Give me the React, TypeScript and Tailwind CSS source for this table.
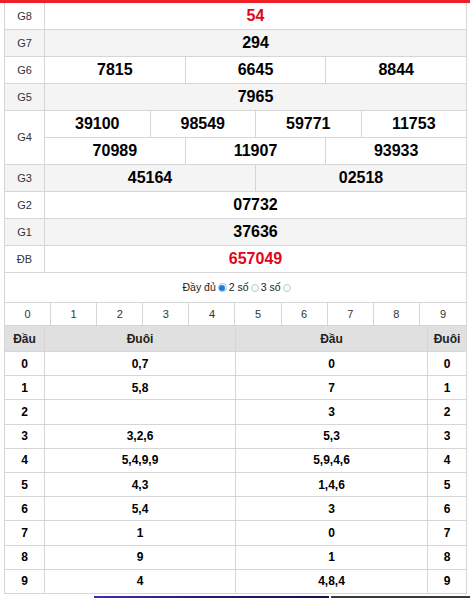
import React from "react";

const LINE = "border-[#d6d6d6]";

type Prize = { label: string; lines: string[][]; alt?: boolean; red?: boolean };

const PRIZES: Prize[] = [
  { label: "G8", lines: [["54"]], red: true },
  { label: "G7", lines: [["294"]], alt: true },
  { label: "G6", lines: [["7815", "6645", "8844"]] },
  { label: "G5", lines: [["7965"]], alt: true },
  {
    label: "G4",
    lines: [
      ["39100", "98549", "59771", "11753"],
      ["70989", "11907", "93933"],
    ],
  },
  { label: "G3", lines: [["45164", "02518"]], alt: true },
  { label: "G2", lines: [["07732"]] },
  { label: "G1", lines: [["37636"]], alt: true },
  { label: "ĐB", lines: [["657049"]], red: true },
];

// đầu | đuôi (left half), đầu | đuôi (right half)
const LOTO: [string, string, string, string][] = [
  ["0", "0,7", "0", "0"],
  ["1", "5,8", "7", "1"],
  ["2", "", "3", "2"],
  ["3", "3,2,6", "5,3", "3"],
  ["4", "5,4,9,9", "5,9,4,6", "4"],
  ["5", "4,3", "1,4,6", "5"],
  ["6", "5,4", "3", "6"],
  ["7", "1", "0", "7"],
  ["8", "9", "1", "8"],
  ["9", "4", "4,8,4", "9"],
];

function PrizeRow({ p }: { p: Prize }) {
  return (
    <div
      className={`flex border-b ${LINE} ${p.alt ? "bg-[#f4f4f4]" : "bg-white"}`}
    >
      <div
        className={`w-[40px] shrink-0 border-r ${LINE} flex items-center justify-center text-[11px] text-[#333]`}
      >
        {p.label}
      </div>
      <div className="flex-1 flex flex-col">
        {p.lines.map((line, i) => (
          <div
            key={i}
            className={
              i < p.lines.length - 1
                ? `flex h-[27px] border-b ${LINE}`
                : "flex h-[26px]"
            }
          >
            {line.map((n, j) => (
              <div
                key={j}
                className={`flex-1 flex items-center justify-center text-[16px] font-bold ${
                  p.red ? "text-[#e2061c]" : "text-black"
                } ${j < line.length - 1 ? `border-r ${LINE}` : ""}`}
              >
                {n}
              </div>
            ))}
          </div>
        ))}
      </div>
    </div>
  );
}

function Radio({ checked }: { checked?: boolean }) {
  return checked ? (
    <span className="mx-[1px] inline-flex h-[9px] w-[9px] items-center justify-center rounded-full border border-[#8fbfe8] bg-white">
      <span className="h-[6px] w-[6px] rounded-full bg-[#1f7fd6]" />
    </span>
  ) : (
    <span className="mx-[1px] inline-block h-[8px] w-[8px] rounded-full border border-[#c8c8c8] bg-[#fafafa]" />
  );
}

export default function App() {
  return (
    <div className="w-[470px] h-[598px] overflow-hidden bg-white font-['Liberation_Sans',Arial,sans-serif]">
      <div className="h-[3px] bg-[#ee2127]" />
      <div className={`ml-[4px] w-[463px] border-x ${LINE}`}>
        {PRIZES.map((p) => (
          <PrizeRow key={p.label} p={p} />
        ))}

        {/* loại số hiển thị */}
        <div
          className={`h-[30px] border-b ${LINE} flex items-center justify-center gap-[1px] pl-[3px] text-[10.5px] text-[#222]`}
        >
          <span>Đầy đủ</span>
          <Radio checked />
          <span>2 số</span>
          <Radio />
          <span>3 số</span>
          <Radio />
        </div>

        <div className={`grid grid-cols-10 h-[23px] border-b ${LINE}`}>
          {Array.from({ length: 10 }, (_, i) => (
            <div
              key={i}
              className={`flex items-center justify-center text-[11px] text-[#333] ${
                i < 9 ? `border-r ${LINE}` : ""
              }`}
            >
              {i}
            </div>
          ))}
        </div>

        <div
          className={`grid grid-cols-[40px_191px_192px_1fr] h-[26px] border-b ${LINE} bg-[#e0e0e0] text-[12px] font-bold text-[#222]`}
        >
          <div className={`flex items-center justify-center border-r ${LINE}`}>Đầu</div>
          <div className={`flex items-center justify-center border-r ${LINE}`}>Đuôi</div>
          <div className={`flex items-center justify-center border-r ${LINE}`}>Đầu</div>
          <div className="flex items-center justify-center">Đuôi</div>
        </div>

        {LOTO.map((r) => (
          <div
            key={r[0]}
            className={`grid grid-cols-[40px_191px_192px_1fr] h-[24.2px] border-b ${LINE} text-[12px] font-bold text-black`}
          >
            <div className={`flex items-center justify-center border-r ${LINE}`}>{r[0]}</div>
            <div className={`flex items-center justify-center border-r ${LINE}`}>{r[1]}</div>
            <div className={`flex items-center justify-center border-r ${LINE}`}>{r[2]}</div>
            <div className="flex items-center justify-center">{r[3]}</div>
          </div>
        ))}
      </div>

      {/* phần đầu của khối kế tiếp bị cắt */}
      <div className="mt-[2px] flex h-[4px]">
        <div className="w-[94px]" />
        <div className="w-[235px] bg-gradient-to-r from-[#3d2fb5] via-[#241a6e] to-[#15124a]" />
        <div className="w-[2px]" />
        <div className="flex-1 bg-[#3a3a3a]" />
      </div>
    </div>
  );
}
